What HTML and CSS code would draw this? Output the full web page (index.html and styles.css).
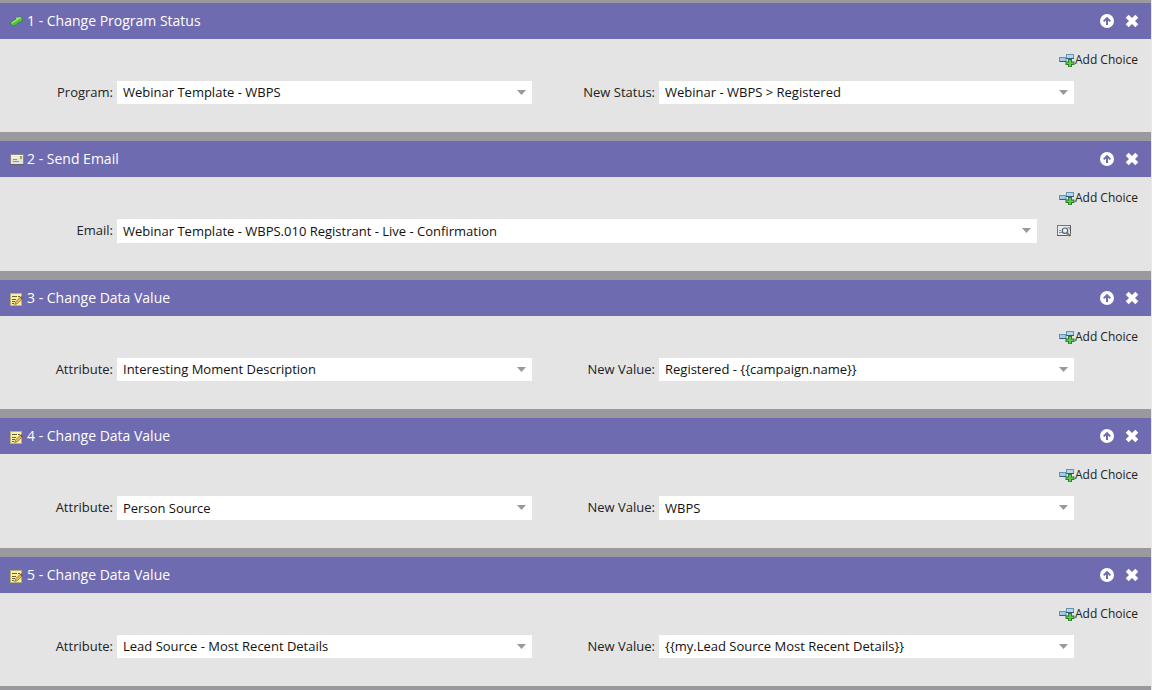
FILE: index.html
```
<!DOCTYPE html>
<html lang="en">
<head>
<meta charset="utf-8">
<meta name="viewport" content="width=device-width, initial-scale=1">
<title>Flow steps</title>
<link rel="stylesheet" href="styles.css">
</head>
<body>
<svg class="sprites" aria-hidden="true">
  <symbol id="up" viewBox="0 0 14 14"><circle cx="7" cy="7" r="7" fill="#fff"/><path d="M7 11V4.500M3.700 7.400 7 4.100l3.300 3.300" fill="none" stroke="#6f6bb0" stroke-width="2"/></symbol>
  <symbol id="close" viewBox="0 0 14 14"><path d="M2.200 2.200 11.800 11.800M11.800 2.200 2.200 11.800" stroke="#fff" stroke-width="4.200"/></symbol>
  <symbol id="choice" viewBox="0 0 16 14">
    <rect x=".5" y="4.500" width="6.500" height="4" fill="#a3cbe8" stroke="#6591b2"/>
    <path d="M1 8.500h6" stroke="#2f5a7a"/>
    <rect x="7.500" y="1.500" width="7" height="4" fill="#b4d7ee" stroke="#6591b2"/>
    <path d="M7 5.500h8" stroke="#2f5a7a"/>
    <path d="M9 6h4v2.500h2.500V12H13v2.500H9V12H6.500V8.500H9z" fill="#2c7a2e"/>
    <path d="M10 7h2v2.500h2.500V11H12v2.500h-2V11H7.500V9.500H10z" fill="#5ccb4e"/>
  </symbol>
  <symbol id="arrow" viewBox="0 0 13 11"><path d="M.7 6.500 6 3 4.700 1.600 12.300 1 12 6.700 10.200 5.500 5 9.400H1.500Q.2 8 .7 6.500z" fill="#4fc636" stroke="#367b45" stroke-width=".7"/><path d="M1.800 6.900 7.800 3.200 7 2.300 11 1.900" fill="none" stroke="#a9ef86" stroke-width="1.200"/></symbol>
  <symbol id="mail" viewBox="0 0 14 11"><rect x=".5" y=".5" width="13" height="10" fill="#e3e3dd" stroke="#8b8982"/><path d="M1.500 1.500h11M1.500 3.500h7" stroke="#fafafa"/><path d="M3 5.500h4M3 7.500h6" stroke="#929290"/><rect x="10" y="2" width="2" height="3" fill="#b2a344"/><path d="M0 10.500h14" stroke="#67645f"/></symbol>
  <symbol id="note" viewBox="0 0 13 14"><path d="M.5 1.500h11v12H.5z" fill="#f5f1a6" stroke="#b9b36d"/><path d="M2 4.500h5M8 4.500h2M2 7.500h4M2 9.500h3M2 11.500h2" stroke="#66623a"/><path d="M4.700 12.500 5.700 9.700 10.300 5.300l1.800 1.800L7.500 11.500z" fill="#e8bf55" stroke="#80602a" stroke-width=".7"/><path d="m10 5.500 1.200-1.200 1.700 1.700L11.700 7.200z" fill="#a33c3c"/></symbol>
  <symbol id="preview" viewBox="0 0 14 12"><rect x=".5" y=".5" width="13" height="10" fill="#e9e9ea" stroke="#77777b"/><path d="M0 10.500h10M13.500 1v7" stroke="#5c5c60"/><path d="M2 7.500h4M2 5.500h2" stroke="#909092"/><circle cx="8" cy="5.700" r="2.700" fill="#dff1fc" stroke="#56646f" stroke-width="1.200"/><path d="m10 7.800 3 3.400" stroke="#986b3a" stroke-width="2"/><path d="M10.500 2.500h2v2" stroke="#b5a22b" fill="none"/></symbol>
</svg>
<main class="flow">
  <section class="step">
    <header class="bar"><svg class="kind"><use href="#arrow" width="13" height="11" y="3"/></svg><h2 class="title">1 - Change Program Status</h2>
      <button class="tool" aria-label="Move up"><svg><use href="#up"/></svg></button><button class="tool" aria-label="Delete"><svg><use href="#close"/></svg></button></header>
    <div class="content"><button class="add"><svg class="add-icon"><use href="#choice"/></svg>Add Choice</button>
      <div class="fields"><label class="label" for="a1">Program:</label><div class="combo"><select id="a1"><option>Webinar Template - WBPS</option></select></div><label class="label" for="b1">New Status:</label><div class="combo"><select id="b1"><option>Webinar - WBPS &gt; Registered</option></select></div></div></div>
  </section>
  <section class="step">
    <header class="bar"><svg class="kind"><use href="#mail" width="14" height="11" y="3"/></svg><h2 class="title">2 - Send Email</h2>
      <button class="tool" aria-label="Move up"><svg><use href="#up"/></svg></button><button class="tool" aria-label="Delete"><svg><use href="#close"/></svg></button></header>
    <div class="content"><button class="add"><svg class="add-icon"><use href="#choice"/></svg>Add Choice</button>
      <div class="fields single"><label class="label" for="a2">Email:</label><div class="combo"><select id="a2"><option>Webinar Template - WBPS.010 Registrant - Live - Confirmation</option></select></div><button class="preview" aria-label="Preview email"><svg><use href="#preview"/></svg></button></div></div>
  </section>
  <section class="step">
    <header class="bar"><svg class="kind"><use href="#note" width="13" height="14" y="2"/></svg><h2 class="title">3 - Change Data Value</h2>
      <button class="tool" aria-label="Move up"><svg><use href="#up"/></svg></button><button class="tool" aria-label="Delete"><svg><use href="#close"/></svg></button></header>
    <div class="content"><button class="add"><svg class="add-icon"><use href="#choice"/></svg>Add Choice</button>
      <div class="fields"><label class="label" for="a3">Attribute:</label><div class="combo"><select id="a3"><option>Interesting Moment Description</option></select></div><label class="label" for="b3">New Value:</label><div class="combo"><select id="b3"><option>Registered - {{campaign.name}}</option></select></div></div></div>
  </section>
  <section class="step">
    <header class="bar"><svg class="kind"><use href="#note" width="13" height="14" y="2"/></svg><h2 class="title">4 - Change Data Value</h2>
      <button class="tool" aria-label="Move up"><svg><use href="#up"/></svg></button><button class="tool" aria-label="Delete"><svg><use href="#close"/></svg></button></header>
    <div class="content"><button class="add"><svg class="add-icon"><use href="#choice"/></svg>Add Choice</button>
      <div class="fields"><label class="label" for="a4">Attribute:</label><div class="combo"><select id="a4"><option>Person Source</option></select></div><label class="label" for="b4">New Value:</label><div class="combo"><select id="b4"><option>WBPS</option></select></div></div></div>
  </section>
  <section class="step">
    <header class="bar"><svg class="kind"><use href="#note" width="13" height="14" y="2"/></svg><h2 class="title">5 - Change Data Value</h2>
      <button class="tool" aria-label="Move up"><svg><use href="#up"/></svg></button><button class="tool" aria-label="Delete"><svg><use href="#close"/></svg></button></header>
    <div class="content"><button class="add"><svg class="add-icon"><use href="#choice"/></svg>Add Choice</button>
      <div class="fields"><label class="label" for="a5">Attribute:</label><div class="combo"><select id="a5"><option>Lead Source - Most Recent Details</option></select></div><label class="label" for="b5">New Value:</label><div class="combo"><select id="b5"><option>{{my.Lead Source Most Recent Details}}</option></select></div></div></div>
  </section>
</main>
</body>
</html>
```
FILE: styles.css
```
* { box-sizing: border-box; }
body { margin: 0; background: #e8e8e8; font: 13px/18px "Open Sans", sans-serif; color: #222; }
button, select { font: inherit; color: inherit; border: 0; padding: 0; margin: 0; background: none; }
svg { display: block; }
.sprites { display: none; }
.flow { display: flex; flex-direction: column; gap: 9px; margin-right: 1px; padding: 3px 0 4px; background: #9a999d; }
.bar { display: flex; align-items: center; height: 36px; padding: 0 12px 0 10px; background: #6f6bb0; color: #fff; }
.kind { width: 14px; height: 16px; margin-right: 3px; }
.title { flex: 1; margin: 0; font-size: 14px; line-height: 20px; font-weight: 400; }
.tool { margin-left: 11px; }
.tool svg { width: 14px; height: 14px; }
.content { padding: 12px 0 28px; background: #e4e4e4; }
.add { display: flex; align-items: center; margin: 0 13px 12px auto; font-size: 12px; line-height: 18px; }
.add-icon { width: 16px; height: 14px; overflow: visible; }
.fields { display: grid; grid-template-columns: 113px 1fr 119px 1fr; column-gap: 4px; align-items: center; padding-right: 77px; }
.single { grid-template-columns: 113px 1fr auto; padding-right: 80px; }
.label { text-align: right; padding-bottom: 2px; }
.combo { position: relative; }
.combo select { display: block; width: 100%; height: 23px; padding: 0 24px 1px 6px; background: #fff; border-radius: 0; appearance: none; color: #111; }
.step:nth-child(even) select { height: 24px; }
.combo::after { content: ""; position: absolute; right: 6px; top: 9px; width: 9px; height: 5px; background: #999; clip-path: polygon(0 0, 100% 0, 50% 100%); pointer-events: none; }
.preview { margin-left: 16px; }
.preview svg { width: 14px; height: 12px; }
```
